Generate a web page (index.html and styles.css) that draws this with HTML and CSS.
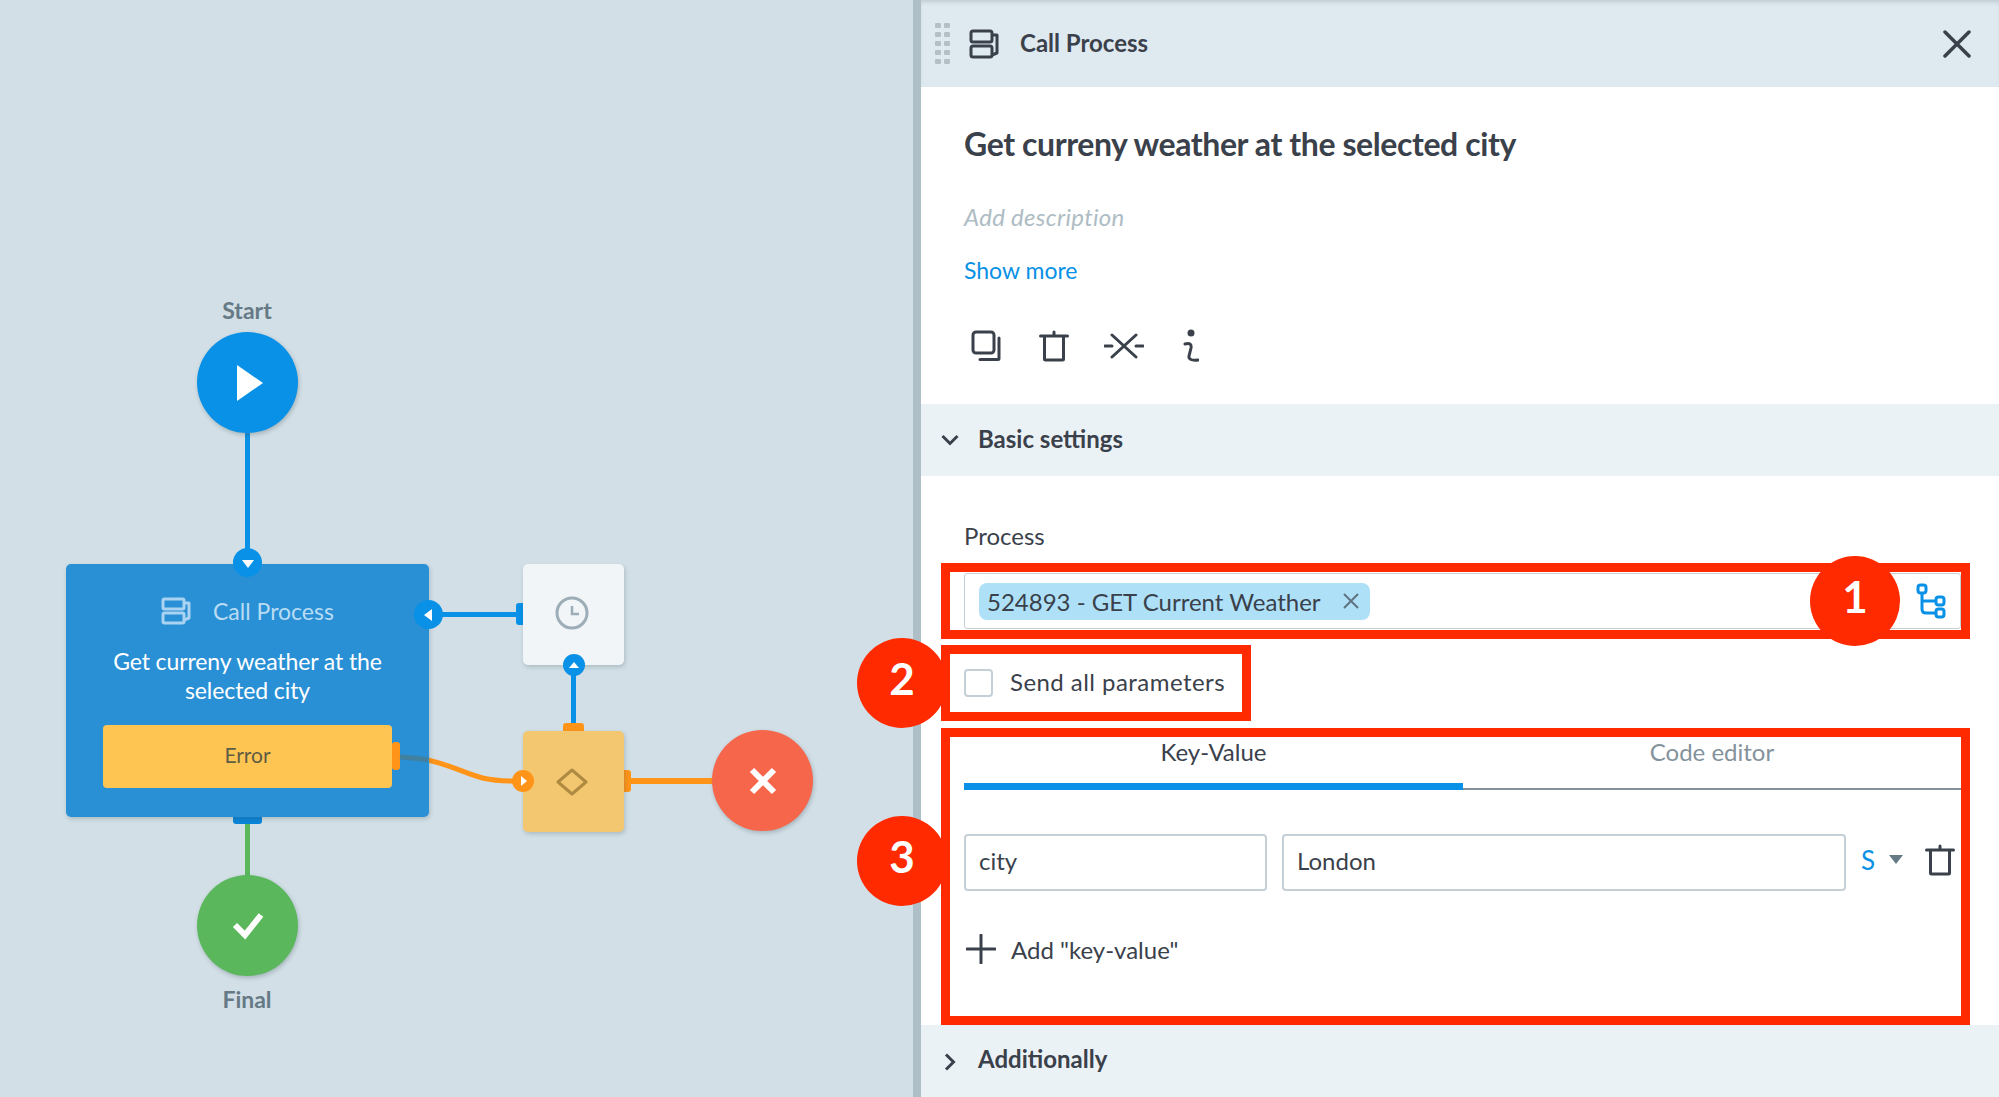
FILE: index.html
```html
<!DOCTYPE html>
<html lang="en">
<head>
  <meta charset="UTF-8">
  <title>Call Process</title>
  <link rel="stylesheet" href="styles.css">
</head>
<body>
<div class="app">

  <!-- free canvas: node places are the content here -->
  <div class="canvas">
    <svg class="wires" width="913" height="1097">
      <rect x="245" y="432" width="5" height="120" fill="#0891e6"/>
      <rect x="428" y="612" width="90" height="5" fill="#0891e6"/>
      <rect x="571" y="670" width="5" height="55" fill="#0891e6"/>
      <rect x="245" y="822" width="5" height="56" fill="#5ab75c"/>
      <rect x="628" y="778" width="90" height="6" fill="#ff9419"/>
      <path d="M428 760 C470 770 470 781 515 781" fill="none" stroke="#ff9419" stroke-width="5"/>
    </svg>

    <div class="flow-label label-start">Start</div>
    <div class="round round-start">
      <svg width="26" height="36" viewBox="0 0 26 36"><path d="M0 0L26 18L0 36Z" fill="#fff"/></svg>
    </div>

    <div class="stub stub-bottom"></div>
    <div class="node node-call">
      <div class="node-head">
        <svg width="30" height="28" viewBox="0 0 30 28" fill="none" stroke="#a9d3f1" stroke-width="3" stroke-linejoin="round"><rect x="2" y="2" width="21" height="10" rx="1.5"/><rect x="2" y="16" width="21" height="10" rx="1.5"/><path d="M23 6h5v15l-5 2"/></svg>
        <span>Call Process</span>
      </div>
      <div class="node-name">Get curreny weather at the selected city</div>
      <div class="node-error">Error</div>
    </div>
    <div class="stub stub-error"></div>
    <svg class="wires wires-top" width="913" height="1097">
      <path d="M400 757 C412 758 420 758 428 760" fill="none" stroke="#41809e" stroke-width="5"/>
    </svg>
    <div class="port port-big port-in"><i class="tri tri-down"></i></div>
    <div class="port port-big port-left"><i class="tri tri-left"></i></div>

    <div class="stub stub-clock"></div>
    <div class="node node-square node-clock">
      <svg width="34" height="34" viewBox="0 0 34 34" fill="none" stroke="#9dadb7" stroke-width="3"><circle cx="17" cy="17" r="15"/><path d="M17 10V18H24" stroke-width="2.500"/></svg>
    </div>
    <div class="port port-small port-up"><i class="tri tri-up"></i></div>

    <div class="stub stub-top"></div>
    <div class="stub stub-right"></div>
    <div class="node node-square node-gate">
      <svg width="32" height="28" viewBox="0 0 32 28" fill="none" stroke="#af8a42" stroke-width="3"><path d="M16 2L30 14L16 26L2 14Z" stroke-linejoin="round"/></svg>
    </div>
    <div class="port port-small port-gate"><i class="tri tri-right"></i></div>

    <div class="round round-error">
      <svg width="28" height="28" viewBox="0 0 28 28"><path d="M3 3L25 25M25 3L3 25" stroke="#fff" stroke-width="6"/></svg>
    </div>

    <div class="round round-final">
      <svg width="32" height="28" viewBox="0 0 32 28" fill="none"><path d="M3 13L13 23L29 3" stroke="#fff" stroke-width="6"/></svg>
    </div>
    <div class="flow-label label-final">Final</div>
  </div>

  <div class="splitter"></div>

  <div class="panel">
    <header class="panel-head">
      <div class="grip"><i></i><i></i><i></i><i></i><i></i><i></i><i></i><i></i><i></i><i></i></div>
      <svg class="head-icon" width="30" height="30" viewBox="0 0 30 30" fill="none" stroke="#3a414b" stroke-width="3" stroke-linejoin="round"><rect x="2" y="2" width="21" height="11" rx="2"/><rect x="2" y="17" width="21" height="11" rx="2"/><path d="M23 6h5v18l-5 2"/></svg>
      <span class="head-title">Call Process</span>
      <svg class="close" width="28" height="28" viewBox="0 0 28 28"><path d="M2 2L26 26M26 2L2 26" stroke="#3a414b" stroke-width="3.500" stroke-linecap="round"/></svg>
    </header>

    <h1 class="title">Get curreny weather at the selected city</h1>
    <div class="desc">Add description</div>
    <a class="more">Show more</a>

    <div class="tools">
      <svg width="30" height="32" viewBox="0 0 30 32" fill="none" stroke="#3a414b" stroke-width="3" stroke-linecap="round" stroke-linejoin="round"><rect x="2" y="2" width="21" height="21" rx="3"/><path d="M28 8V28.500a1 1 0 0 1-1 1H9"/></svg>
      <svg width="30" height="32" viewBox="0 0 30 32" fill="none" stroke="#3a414b" stroke-width="3" stroke-linecap="round" stroke-linejoin="round"><path d="M1.500 6H28.500M15 2V6M5.500 6V29a1 1 0 0 0 1 1H23.500a1 1 0 0 0 1-1V6"/></svg>
      <svg width="40" height="28" viewBox="0 0 40 28" fill="none" stroke="#3a414b" stroke-width="3" stroke-linecap="round"><path d="M8 3L32 25M32 3L8 25M1 14H8M32 14H39"/></svg>
      <svg width="16" height="34" viewBox="0 0 16 34" fill="none" stroke="#3a414b" stroke-width="3" stroke-linecap="round"><circle cx="8" cy="4" r="3.500" fill="#3a414b" stroke="none"/><path d="M2 15Q9 13 8 19L6 27Q5 32 15 31"/></svg>
    </div>

    <div class="band band-basic">
      <svg width="18" height="12" viewBox="0 0 18 12" fill="none" stroke="#3a414b" stroke-width="3"><path d="M1.500 2L9 9.500L16.500 2"/></svg>
      <span>Basic settings</span>
    </div>

    <div class="section">
      <div class="field-label">Process</div>
      <div class="process-input">
        <span class="chip">524893 - GET Current Weather
          <svg width="16" height="16" viewBox="0 0 16 16"><path d="M1 1L15 15M15 1L1 15" stroke="#5f7380" stroke-width="2"/></svg>
        </span>
        <svg class="tree" width="30" height="36" viewBox="0 0 30 36" fill="none" stroke="#0891e6" stroke-width="3"><rect x="2" y="2" width="8" height="8" rx="2.500"/><rect x="20" y="14" width="8" height="8" rx="2.500"/><rect x="20" y="26" width="8" height="8" rx="2.500"/><path d="M6 10V26Q6 30 10 30H20M6 18H20"/></svg>
      </div>

      <label class="check-row"><span class="checkbox"></span><span class="check-text">Send all parameters</span></label>

      <div class="tabs">
        <div class="tab tab-active">Key-Value</div>
        <div class="tab">Code editor</div>
      </div>

      <div class="kv-row">
        <div class="text-input input-key">city</div>
        <div class="text-input input-value">London</div>
        <span class="type">S</span>
        <i class="type-arrow"></i>
        <svg class="kv-trash" width="30" height="32" viewBox="0 0 30 32" fill="none" stroke="#3a414b" stroke-width="3" stroke-linecap="round" stroke-linejoin="round"><path d="M1.500 6H28.500M15 2V6M5.500 6V29a1 1 0 0 0 1 1H23.500a1 1 0 0 0 1-1V6"/></svg>
      </div>

      <div class="add-row">
        <svg width="30" height="30" viewBox="0 0 30 30"><path d="M15 1V29M1 15H29" stroke="#3a414b" stroke-width="3" stroke-linecap="round"/></svg>
        <span>Add "key-value"</span>
      </div>
    </div>

    <div class="band band-extra">
      <svg width="12" height="18" viewBox="0 0 12 18" fill="none" stroke="#3a414b" stroke-width="3"><path d="M2 1.500L9.500 9L2 16.500"/></svg>
      <span>Additionally</span>
    </div>
  </div>

  <!-- annotations painted over the screenshot -->
  <div class="frame frame-one"></div>
  <div class="frame frame-two"></div>
  <div class="frame frame-three"></div>
  <div class="badge badge-one">1</div>
  <div class="badge badge-two">2</div>
  <div class="badge badge-three">3</div>
</div>
</body>
</html>
```

FILE: styles.css
```css
* {
  box-sizing: border-box;
}
body {
  margin: 0;
  font-family: Lato, "Open Sans", sans-serif;
  color: #3a414b;
  background: #d2dfe6;
}
.app {
  position: relative;
  display: flex;
  width: 1999px;
  height: 1097px;
  overflow: hidden;
}

/* canvas */
.canvas {
  position: relative;
  width: 913px;
  flex: none;
  background: #d2dfe6;
}
.wires {
  position: absolute;
  left: 0;
  top: 0;
}
.flow-label {
  position: absolute;
  left: 197px;
  width: 100px;
  text-align: center;
  font-size: 23px;
  font-weight: 700;
  line-height: 28px;
  color: #667a86;
}
.label-start {
  top: 296px;
}
.label-final {
  top: 985px;
}
.round {
  position: absolute;
  display: flex;
  align-items: center;
  justify-content: center;
  width: 101px;
  height: 101px;
  border-radius: 50%;
  box-shadow: 1px 2px 4px rgba(60, 80, 90, 0.3);
}
.round-start {
  left: 197px;
  top: 332px;
  background: #0891e6;
}
.round-start svg {
  margin-left: 4px;
}
.round-final {
  left: 197px;
  top: 875px;
  background: #5ab75c;
}
.round-error {
  left: 712px;
  top: 730px;
  background: #f6664b;
}
.node {
  position: absolute;
  border-radius: 5px;
  box-shadow: 1px 2px 4px rgba(60, 80, 90, 0.25);
}
.node-call {
  left: 66px;
  top: 564px;
  width: 363px;
  height: 253px;
  background: #2a90d5;
  color: #fff;
}
.node-head {
  display: flex;
  align-items: center;
  height: 32px;
  margin-top: 31px;
  padding-left: 95px;
  font-size: 23px;
  color: #b9dcf4;
}
.node-head span {
  margin-left: 22px;
}
.node-name {
  width: 300px;
  margin: 20px auto 0;
  text-align: center;
  font-size: 23px;
  letter-spacing: -0.1px;
  line-height: 29px;
}
.node-error {
  position: absolute;
  left: 37px;
  top: 161px;
  width: 289px;
  height: 63px;
  border-radius: 4px;
  background: #ffc552;
  color: #5f5c45;
  font-size: 21px;
  line-height: 59px;
  text-align: center;
}
.node-square {
  display: flex;
  align-items: center;
  justify-content: center;
  width: 101px;
  height: 101px;
}
.node-clock {
  left: 523px;
  top: 564px;
  background: #f1f5f7;
}
.node-clock svg {
  margin-left: -4px;
  margin-top: -3px;
}
.node-gate {
  left: 523px;
  top: 731px;
  background: #f2c76f;
}
.node-gate svg {
  margin-left: -3px;
}
.stub {
  position: absolute;
  border-radius: 3px;
}
.stub-bottom {
  left: 233px;
  top: 812px;
  width: 29px;
  height: 12px;
  background: #0a84d8;
}
.stub-error {
  left: 392px;
  top: 742px;
  width: 8px;
  height: 28px;
  background: #ff9419;
}
.stub-clock {
  left: 516px;
  top: 603px;
  width: 12px;
  height: 22px;
  background: #0891e6;
}
.stub-top {
  left: 563px;
  top: 723px;
  width: 21px;
  height: 12px;
  background: #ff9419;
}
.stub-right {
  left: 620px;
  top: 770px;
  width: 11px;
  height: 22px;
  background: #ff9419;
}
.port {
  position: absolute;
  display: flex;
  align-items: center;
  justify-content: center;
  border-radius: 50%;
  background: #0891e6;
}
.port-big {
  width: 29px;
  height: 29px;
}
.port-small {
  width: 22px;
  height: 22px;
}
.port-in {
  left: 233px;
  top: 548px;
}
.port-left {
  left: 414px;
  top: 600px;
}
.port-up {
  left: 563px;
  top: 654px;
}
.port-gate {
  left: 512px;
  top: 770px;
  background: #ff9419;
}
.tri {
  display: block;
  width: 0;
  height: 0;
  border-style: solid;
  border-color: transparent;
}
.tri-down {
  margin-top: 2px;
  border-width: 8px 6px 0;
  border-top-color: #fff;
}
.tri-left {
  margin-left: -2px;
  border-width: 6px 8px 6px 0;
  border-right-color: #fff;
}
.tri-up {
  border-width: 0 5px 6px;
  border-bottom-color: #fff;
}
.tri-right {
  margin-left: 2px;
  border-width: 5px 0 5px 6px;
  border-left-color: #fff;
}

/* panel */
.splitter {
  width: 8px;
  flex: none;
  background: #aebfc7;
}
.panel {
  flex: 1;
  min-width: 0;
  background: #fff;
}
.panel-head {
  display: flex;
  align-items: center;
  height: 87px;
  padding: 0 28px 0 14px;
  background: #dfe9f0;
  box-shadow: inset 0 4px 4px -2px rgba(90, 110, 120, 0.25);
}
.grip {
  display: grid;
  grid-template-columns: 6px 6px;
  gap: 4px 3px;
  width: 15px;
}
.grip i {
  display: block;
  height: 5px;
  border-radius: 1px;
  background: #b3c0c8;
}
.head-icon {
  margin-left: 19px;
}
.head-title {
  margin: 0 0 3px 21px;
  font-size: 24px;
  font-weight: 700;
}
.close {
  margin-left: auto;
}
.title {
  margin: 37px 0 0 43px;
  font-size: 32px;
  letter-spacing: -0.41px;
  line-height: 40px;
  font-weight: 700;
}
.desc {
  margin: 37px 0 0 43px;
  font-size: 24px;
  letter-spacing: 0.3px;
  line-height: 32px;
  font-style: italic;
  color: #aebcc4;
}
.more {
  display: block;
  margin: 21px 0 0 43px;
  font-size: 23px;
  line-height: 32px;
  color: #0891e6;
}
.tools {
  display: flex;
  align-items: center;
  gap: 38px;
  height: 36px;
  margin: 42px 0 0 50px;
}
.tools svg:nth-child(3) {
  margin-left: -3px;
}
.tools svg:nth-child(4) {
  margin-left: 1px;
}
.band {
  display: flex;
  align-items: center;
  background: #ebf2f6;
  font-size: 24px;
  font-weight: 700;
}
.band span {
  margin-bottom: 4px;
}
.band-basic {
  height: 72px;
  margin-top: 40px;
  padding-left: 20px;
}
.band-basic span {
  margin-left: 19px;
}
.band-extra {
  height: 73px;
  margin-top: 60px;
  padding-left: 23px;
}
.band-extra span {
  margin: 0 0 6px 22px;
}
.section {
  padding: 44px 9px 0 43px;
}
.field-label {
  font-size: 24px;
  line-height: 32px;
}
.process-input {
  display: flex;
  align-items: center;
  justify-content: space-between;
  height: 56px;
  margin: 21px 29px 0 0;
  padding: 0 14px 0 14px;
  border: 1px solid #c5d0d6;
  border-radius: 3px;
}
.chip {
  display: flex;
  align-items: center;
  gap: 22px;
  height: 37px;
  padding: 0 11px 0 8px;
  border-radius: 8px;
  background: #aee0f8;
  font-size: 24px;
}
.tree {
  flex: none;
}
.check-row {
  display: flex;
  align-items: center;
  gap: 17px;
  height: 28px;
  margin-top: 40px;
  font-size: 24px;
}
.check-text {
  margin-bottom: 4px;
  letter-spacing: 0.45px;
}
.checkbox {
  width: 29px;
  height: 28px;
  border: 2px solid #c5d0d6;
  border-radius: 4px;
}
.tabs {
  display: flex;
  margin: 39px 29px 0 0;
  border-bottom: 2px solid #84929b;
}
.tab {
  flex: 1;
  height: 54px;
  margin-bottom: -2px;
  text-align: center;
  font-size: 24px;
  line-height: 32px;
  color: #84929b;
}
.tab-active {
  flex: none;
  width: 499px;
  border-bottom: 7px solid #0891e6;
  color: #3a414b;
}
.kv-row {
  display: flex;
  align-items: center;
  margin-top: 44px;
  height: 57px;
}
.text-input {
  height: 57px;
  padding-left: 13px;
  border: 2px solid #c5d0d6;
  border-radius: 4px;
  font-size: 24px;
  line-height: 50px;
}
.input-key {
  width: 303px;
}
.input-value {
  width: 564px;
  margin-left: 15px;
}
.type {
  margin-left: 15px;
  font-size: 26px;
  line-height: 50px;
  margin-bottom: 6px;
  color: #0891e6;
}
.type-arrow {
  width: 0;
  height: 0;
  margin: 0 0 6px 14px;
  border-style: solid;
  border-width: 9px 7.500px 0;
  border-color: #667a86 transparent transparent;
}
.kv-trash {
  margin: 0 0 6px 22px;
}
.add-row {
  display: flex;
  align-items: center;
  gap: 15px;
  height: 32px;
  margin-top: 42px;
  padding-left: 2px;
  font-size: 24px;
}

/* annotations */
.frame {
  position: absolute;
  border: 9px solid #ff2a00;
}
.frame-one {
  left: 941px;
  top: 563px;
  width: 1029px;
  height: 76px;
}
.frame-two {
  left: 941px;
  top: 645px;
  width: 310px;
  height: 76px;
}
.frame-three {
  left: 941px;
  top: 728px;
  width: 1029px;
  height: 297px;
}
.badge {
  position: absolute;
  width: 90px;
  height: 90px;
  border-radius: 50%;
  background: #ff2a00;
  color: #fff;
  font-size: 44px;
  font-weight: 700;
  line-height: 81px;
  text-align: center;
}
.badge-one {
  left: 1810px;
  top: 556px;
}
.badge-two {
  left: 857px;
  top: 638px;
}
.badge-three {
  left: 857px;
  top: 816px;
}
```
